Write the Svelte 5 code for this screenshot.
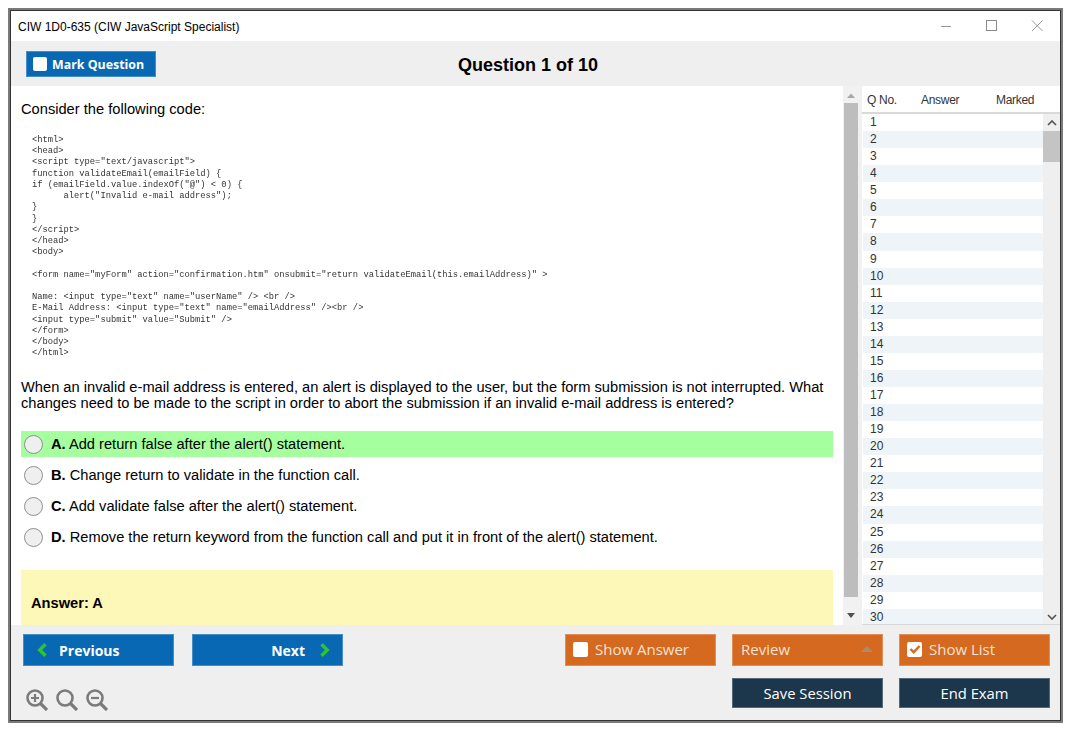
<script>
  const code = `<html>
<head>
<script type="text/javascript">
function validateEmail(emailField) {
if (emailField.value.indexOf("@") < 0) {
      alert("Invalid e-mail address");
}
}
</scr` + `ipt>
</head>
<body>

<form name="myForm" action="confirmation.htm" onsubmit="return validateEmail(this.emailAddress)" >

Name: <input type="text" name="userName" /> <br />
E-Mail Address: <input type="text" name="emailAddress" /><br />
<input type="submit" value="Submit" />
</form>
</body>
</html>`;

  const options = [
    { key: 'A.', text: 'Add return false after the alert() statement.', correct: true },
    { key: 'B.', text: 'Change return to validate in the function call.' },
    { key: 'C.', text: 'Add validate false after the alert() statement.' },
    { key: 'D.', text: 'Remove the return keyword from the function call and put it in front of the alert() statement.' }
  ];

  const rows = Array.from({ length: 30 }, (_, i) => i + 1);
</script>

<div class="window">
  <header class="titlebar">
    <span class="title">CIW 1D0-635 (CIW JavaScript Specialist)</span>
    <div class="controls">
      <svg width="12" height="12" viewBox="0 0 12 12"><path d="M0 6.500h10" stroke="#999" fill="none" /></svg>
      <svg width="12" height="12" viewBox="0 0 12 12"><rect x="0.500" y="0.500" width="10" height="10" stroke="#8a8a8a" fill="none" /></svg>
      <svg width="12" height="12" viewBox="0 0 12 12"><path d="M1 0.500l10.500 10.500M11.500 0.500L1 11" stroke="#999" fill="none" /></svg>
    </div>
  </header>

  <div class="toolbar">
    <button class="btn blue mark"><span class="check"></span><span class="mark-label">Mark Question</span></button>
    <h1>Question 1 of 10</h1>
  </div>

  <main class="main">
    <section class="question">
      <p class="prompt">Consider the following code:</p>
      <pre class="code">{code}</pre>
      <p class="stem">When an invalid e-mail address is entered, an alert is displayed to the user, but the form submission is not interrupted. What changes need to be made to the script in order to abort the submission if an invalid e-mail address is entered?</p>
      <div class="options">
        {#each options as opt}
          <div class="option" class:correct={opt.correct}>
            <span class="radio"></span>
            <span><b>{opt.key}</b> {opt.text}</span>
          </div>
        {/each}
      </div>
      <div class="answer"><b>Answer: A</b></div>
    </section>

    <div class="vscroll">
      <svg width="8" height="5" viewBox="0 0 8 5"><path d="M4 0.500L8 5H0z" fill="#a8a8a8" /></svg>
      <div class="vthumb"></div>
      <svg class="down" width="8" height="5" viewBox="0 0 8 5"><path d="M0 0h8L4 5z" fill="#505050" /></svg>
    </div>

    <aside class="list">
      <div class="list-head">
        <span class="c1">Q No.</span>
        <span class="c2">Answer</span>
        <span class="c3">Marked</span>
      </div>
      <div class="list-body">
        <div class="rows">
          {#each rows as n}
            <div class="row">{n}</div>
          {/each}
        </div>
        <div class="list-scroll">
          <svg width="10" height="6" viewBox="0 0 10 6"><path d="M1 5l4-4 4 4" stroke="#505050" stroke-width="1.600" fill="none" /></svg>
          <div class="list-thumb"></div>
          <svg class="down" width="10" height="6" viewBox="0 0 10 6"><path d="M1 1l4 4 4-4" stroke="#505050" stroke-width="1.600" fill="none" /></svg>
        </div>
      </div>
    </aside>
  </main>

  <footer class="footer">
    <div class="left">
      <div class="nav">
        <button class="btn blue prev">
          <svg width="10" height="14" viewBox="0 0 10 14"><path d="M8.500 1.200L2.700 7l5.800 5.800" stroke="#2fc42f" stroke-width="3.400" fill="none" /></svg>
          Previous
        </button>
        <button class="btn blue next">
          Next
          <svg width="10" height="14" viewBox="0 0 10 14"><path d="M1.500 1.200L7.300 7l-5.800 5.800" stroke="#2fc42f" stroke-width="3.400" fill="none" /></svg>
        </button>
      </div>
      <div class="zoom">
        <svg width="22" height="22" viewBox="0 0 22 22"><circle cx="9" cy="9" r="7.500" stroke="#7b7b7b" stroke-width="2.600" fill="none" /><path d="M14.500 14.500L21 21" stroke="#7b7b7b" stroke-width="3.200" fill="none" /><path d="M5 9h8M9 5v8" stroke="#7b7b7b" stroke-width="2.200" fill="none" /></svg>
        <svg width="22" height="22" viewBox="0 0 22 22"><circle cx="9" cy="9" r="7.500" stroke="#7b7b7b" stroke-width="2.600" fill="none" /><path d="M14.500 14.500L21 21" stroke="#7b7b7b" stroke-width="3.200" fill="none" /></svg>
        <svg width="22" height="22" viewBox="0 0 22 22"><circle cx="9" cy="9" r="7.500" stroke="#7b7b7b" stroke-width="2.600" fill="none" /><path d="M14.500 14.500L21 21" stroke="#7b7b7b" stroke-width="3.200" fill="none" /><path d="M5 9h8" stroke="#7b7b7b" stroke-width="2.200" fill="none" /></svg>
      </div>
    </div>
    <div class="actions">
      <button class="btn orange"><span class="check"></span>Show Answer</button>
      <button class="btn orange review">Review
        <svg width="12" height="6" viewBox="0 0 12 6"><path d="M6 0l6 6H0z" fill="#a98a72" /></svg>
      </button>
      <button class="btn orange"><span class="check">
        <svg width="14" height="14" viewBox="0 0 14 14"><path d="M2.500 7l3.200 3.300 5.800-6.300" stroke="#d4691f" stroke-width="2.400" fill="none" /></svg>
      </span>Show List</button>
      <button class="btn navy save">Save Session</button>
      <button class="btn navy">End Exam</button>
    </div>
  </footer>
</div>

<style>
  :global(body) {
    margin: 0;
    background: #fff;
    font-family: "Liberation Sans", Arial, sans-serif;
    color: #000;
  }
  .window {
    box-sizing: border-box;
    width: 1055px;
    height: 715px;
    margin: 8px 0 0 8px;
    border: 2px solid #7a7a7a;
    box-shadow: inset 0 0 0 1px #333;
    display: flex;
    flex-direction: column;
    background: #fff;
  }
  .titlebar {
    height: 30px;
    flex: none;
    display: flex;
    align-items: center;
    justify-content: space-between;
    padding: 0 17px 0 7px;
    margin: 1px 1px 0;
  }
  .title {
    font-size: 12px;
    padding-top: 1px;
  }
  .controls {
    display: flex;
    gap: 33px;
  }
  .toolbar {
    height: 45px;
    flex: none;
    margin: 0 1px;
    background: #efefef;
    display: flex;
    align-items: center;
    padding-left: 15px;
  }
  .toolbar h1 {
    flex: 1;
    margin: 0 160px 0 0;
    padding-top: 4px;
    font-size: 18px;
    text-align: center;
  }
  .btn {
    box-sizing: border-box;
    border: 1px solid rgba(255, 255, 255, 0.25);
    color: #fff;
    font-family: "Open Sans", sans-serif;
    font-size: 14px;
    display: flex;
    align-items: center;
    padding: 0;
    margin: 0;
  }
  .blue { background: #0868b4; font-weight: 700; }
  .orange { background: #d4691f; }
  .navy { background: #1c364b; justify-content: center; font-size: 14.800px; }
  .check {
    width: 15px;
    height: 15px;
    background: #fff;
    border-radius: 2px;
    flex: none;
    display: flex;
    align-items: center;
    justify-content: center;
  }
  .mark {
    width: 130px;
    height: 26px;
    font-size: 12.400px;
    gap: 5px;
    padding-left: 6px;
  }
  .mark-label { padding-top: 2px; }
  .mark .check { width: 14px; height: 14px; }
  .main {
    height: 539px;
    flex: none;
    margin: 0 1px;
    display: flex;
    overflow: hidden;
  }
  .question {
    width: 832px;
    flex: none;
    box-sizing: border-box;
    padding: 0 0 0 10px;
    display: flex;
    flex-direction: column;
  }
  .prompt {
    margin: 15px 0 0;
    font-size: 14.670px;
    line-height: 16px;
  }
  .code {
    margin: 18px 0 0 11px;
    font-family: "Liberation Mono", monospace;
    font-size: 8.770px;
    line-height: 11.220px;
    color: #333;
    filter: blur(0.3px);
  }
  .stem {
    margin: 20px 0 0;
    width: 812px;
    font-size: 14.670px;
    line-height: 16px;
  }
  .options {
    margin-top: 20px;
    width: 812px;
    display: flex;
    flex-direction: column;
    gap: 5px;
  }
  .option {
    height: 26px;
    display: flex;
    align-items: center;
    gap: 8px;
    padding-left: 3px;
    font-size: 14.670px;
  }
  .correct { background: #a5ff9f; }
  .radio {
    box-sizing: border-box;
    width: 19px;
    height: 19px;
    border-radius: 50%;
    border: 1px solid #8f8f8f;
    background: #efefef;
    flex: none;
  }
  .answer {
    margin-top: 20px;
    width: 812px;
    height: 55px;
    flex: none;
    box-sizing: border-box;
    background: #fdf8b8;
    padding: 25px 0 0 10px;
    font-size: 14.670px;
  }
  .vscroll {
    width: 19px;
    flex: none;
    background: #f1f1f1;
    display: flex;
    flex-direction: column;
    align-items: center;
    padding: 7px 3px 7px 0;
    box-sizing: border-box;
  }
  .vthumb {
    width: 14px;
    height: 494px;
    margin-top: 5px;
    background: #bdbdbd;
  }
  .list {
    flex: 1;
    display: flex;
    flex-direction: column;
    background: #fff;
  }
  .list-head {
    height: 27px;
    flex: none;
    margin-top: 1px;
    box-sizing: border-box;
    border-bottom: 2px solid #d9d9d9;
    font-size: 12px;
    color: #333;
    display: flex;
    align-items: center;
    letter-spacing: -0.3px;
  }
  .c1 { margin-left: 5px; width: 54px; }
  .c2 { width: 75px; }
  .list-body {
    flex: 1;
    display: flex;
    min-height: 0;
    border-bottom: 1px solid #d9d9d9;
  }
  .rows {
    flex: 1;
    overflow: hidden;
    padding: 0 0 0 1px;
  }
  .row {
    height: 17.070px;
    line-height: 17px;
    font-size: 12px;
    color: #333;
    padding-left: 7px;
  }
  .row:nth-child(even) { background: #eff4f8; }
  .list-scroll {
    width: 17px;
    flex: none;
    background: #efefef;
    display: flex;
    flex-direction: column;
    align-items: center;
    padding-top: 6px;
  }
  .list-thumb {
    width: 100%;
    height: 31px;
    margin-top: 5px;
    background: #c4c4c4;
  }
  .down {
    margin-top: auto;
    margin-bottom: 4px;
  }
  .vscroll .down { margin-bottom: 0; }
  .footer {
    flex: 1;
    margin: 0 1px 1px;
    background: #efefef;
    display: flex;
    justify-content: space-between;
    padding: 9px 10px 0 12px;
  }
  .nav {
    display: flex;
    gap: 18px;
  }
  .nav .btn {
    width: 151px;
    height: 32px;
    font-size: 14px;
  }
  .prev { padding-left: 13px; gap: 12px; }
  .next { justify-content: flex-end; padding-right: 12px; gap: 15px; }
  .zoom {
    display: flex;
    gap: 8px;
    margin: 23px 0 0 3px;
  }
  .actions {
    display: grid;
    grid-template-columns: 151px 151px 151px;
    grid-template-rows: 32px 30px;
    column-gap: 16px;
    row-gap: 12px;
  }
  .actions .orange {
    gap: 7px;
    padding: 0 0 2px 7px;
    font-size: 15px;
    color: #f6e2d2;
  }
  .actions .check { width: 15px; height: 15px; }
  .actions .review { justify-content: space-between; padding-left: 8px; padding-right: 9px; }
  .save { grid-column: 2; }
</style>
